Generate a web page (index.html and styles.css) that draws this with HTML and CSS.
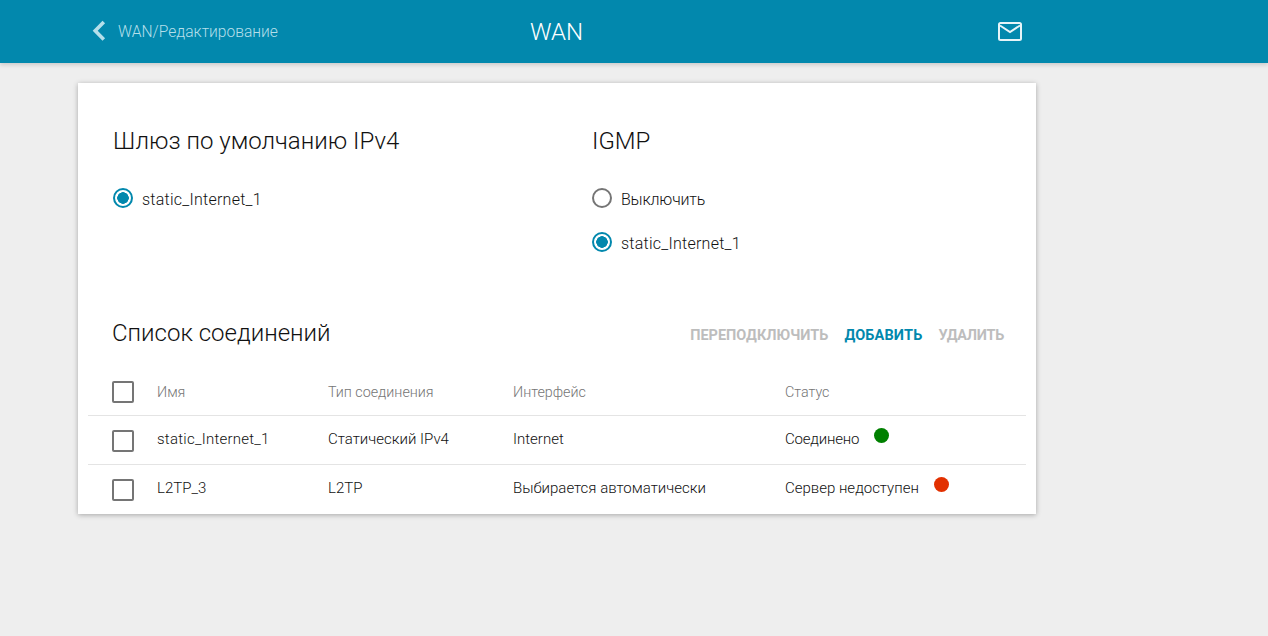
FILE: index.html
```html
<!DOCTYPE html>
<html lang="ru">
<head>
    <meta charset="UTF-8">
    <title>WAN</title>
    <link rel="stylesheet" href="styles.css">
</head>
<body>

    <!-- Top bar -->
    <header class="topbar">
        <a class="back">
            <svg class="back-icon" width="14" height="22" viewBox="0 0 14 22"><path d="M11.8 2 L3.2 10.8 L11.8 19.6" fill="none" stroke="#b5dfea" stroke-width="3.6"/></svg>
            <span class="crumb">WAN/Редактирование</span>
        </a>
        <div class="page-title">WAN</div>
        <svg class="mail-icon" width="24" height="19" viewBox="0 0 24 19"><rect x="1" y="1" width="22" height="17" rx="1.5" fill="none" stroke="#e6f4f8" stroke-width="2"/><path d="M2 3.5 L12 10 L22 3.5" fill="none" stroke="#e6f4f8" stroke-width="2"/></svg>
    </header>

    <div class="card">
        <div class="options">
            <section class="option-group">
                <h2>Шлюз по умолчанию IPv4</h2>
                <div class="radio-row"><span class="radio checked"></span><span class="latin">static_Internet_1</span></div>
            </section>
            <section class="option-group">
                <h2>IGMP</h2>
                <div class="radio-row"><span class="radio"></span><span class="tight">Выключить</span></div>
                <div class="radio-row"><span class="radio checked"></span><span class="latin">static_Internet_1</span></div>
            </section>
        </div>

        <!-- Connections list -->
        <div class="list-head">
            <h2>Список соединений</h2>
            <div class="actions">
                <span class="action">ПЕРЕПОДКЛЮЧИТЬ</span>
                <span class="action active">ДОБАВИТЬ</span>
                <span class="action narrow">УДАЛИТЬ</span>
            </div>
        </div>

        <div class="row row-head">
            <span class="check"></span>
            <span>Имя</span>
            <span>Тип соединения</span>
            <span>Интерфейс</span>
            <span>Статус</span>
        </div>
        <div class="row">
            <span class="check"></span>
            <span class="latin">static_Internet_1</span>
            <span>Статический IPv4</span>
            <span>Internet</span>
            <span class="status"><span class="tight">Соединено</span><i class="dot green"></i></span>
        </div>
        <div class="row">
            <span class="check"></span>
            <span>L2TP_3</span>
            <span>L2TP</span>
            <span>Выбирается автоматически</span>
            <span class="status">Сервер недоступен<i class="dot red"></i></span>
        </div>
    </div>

</body>
</html>
```

FILE: styles.css
```css
body {
    margin: 0;
    height: 636px;
    overflow: hidden;
    background-color: #eeeeee;
    font-family: Roboto, "Noto Sans", sans-serif;
    font-weight: 300;
    color: #111111;
}

.topbar {
    height: 63px;
    display: flex;
    align-items: center;
    position: relative;
    background-color: #0288ad;
    box-shadow: 0 2px 4px rgba(0, 0, 0, 0.15);
}

.back {
    display: flex;
    align-items: center;
    width: 438px;
    margin-left: 92px;
}

.back-icon {
    margin-top: -1px;
}

.crumb {
    margin-left: 12px;
    font-size: 15.6px;
    color: #b5dfea;
}

.page-title {
    width: 468px;
    font-size: 24px;
    color: #ffffff;
}

.mail-icon {
    margin-bottom: 1px;
}

.card {
    width: 958px;
    height: 431px;
    margin: 20px 0 0 78px;
    background-color: #ffffff;
    box-shadow: 0 1px 5px rgba(0, 0, 0, 0.3);
}

h2 {
    margin: 0;
    font-size: 24px;
    font-weight: 300;
    line-height: 28px;
}

.options {
    display: grid;
    grid-template-columns: 479px 1fr;
    height: 234px;
    padding: 44px 0 0 35px;
    box-sizing: border-box;
}

.option-group h2 {
    margin-bottom: 22px;
}

.radio-row {
    display: flex;
    align-items: center;
    height: 44px;
    font-size: 16px;
}

.latin {
    letter-spacing: 0.25px;
}

.tight {
    letter-spacing: -0.2px;
}

.radio {
    width: 20px;
    height: 20px;
    margin: 0 9px 2px 0;
    box-sizing: border-box;
    border: 2px solid #757575;
    border-radius: 50%;
}

.radio.checked {
    border-color: #0288ad;
    background: radial-gradient(circle, #0288ad 0 5.5px, transparent 6px);
}

.list-head {
    display: flex;
    justify-content: space-between;
    align-items: center;
    height: 32px;
    padding: 0 32px 0 34px;
}

.actions {
    display: flex;
    gap: 16px;
    margin-top: 4px;
}

.action {
    font-size: 14.5px;
    font-weight: 700;
    color: #bdbdbd;
}

.action.active {
    color: #0288ad;
    letter-spacing: 0.15px;
}

.action.narrow {
    letter-spacing: -0.3px;
}

.row {
    display: grid;
    grid-template-columns: 45px 171px 185px 272px 1fr;
    align-items: center;
    height: 46px;
    margin: 0 10px;
    padding: 0 0 2px 24px;
    font-size: 15px;
    border-top: 1px solid #e4e4e4;
}

.row-head {
    padding-bottom: 0;
    margin-top: 20px;
    border-top: none;
    color: #757575;
    font-size: 14.3px;
    border-bottom: 1px solid #e4e4e4;
}

.row-head + .row {
    border-top: none;
}

.check {
    width: 22px;
    height: 22px;
    margin-top: 4px;
    box-sizing: border-box;
    border: 2px solid #757575;
    border-radius: 2px;
}

.row-head .check {
    margin-top: 0;
}

.status {
    display: flex;
    align-items: center;
}

.dot {
    width: 15px;
    height: 15px;
    margin: -7px 0 0 15px;
    border-radius: 50%;
}

.dot.green {
    background-color: #008000;
}

.dot.red {
    background-color: #e23000;
}
```
